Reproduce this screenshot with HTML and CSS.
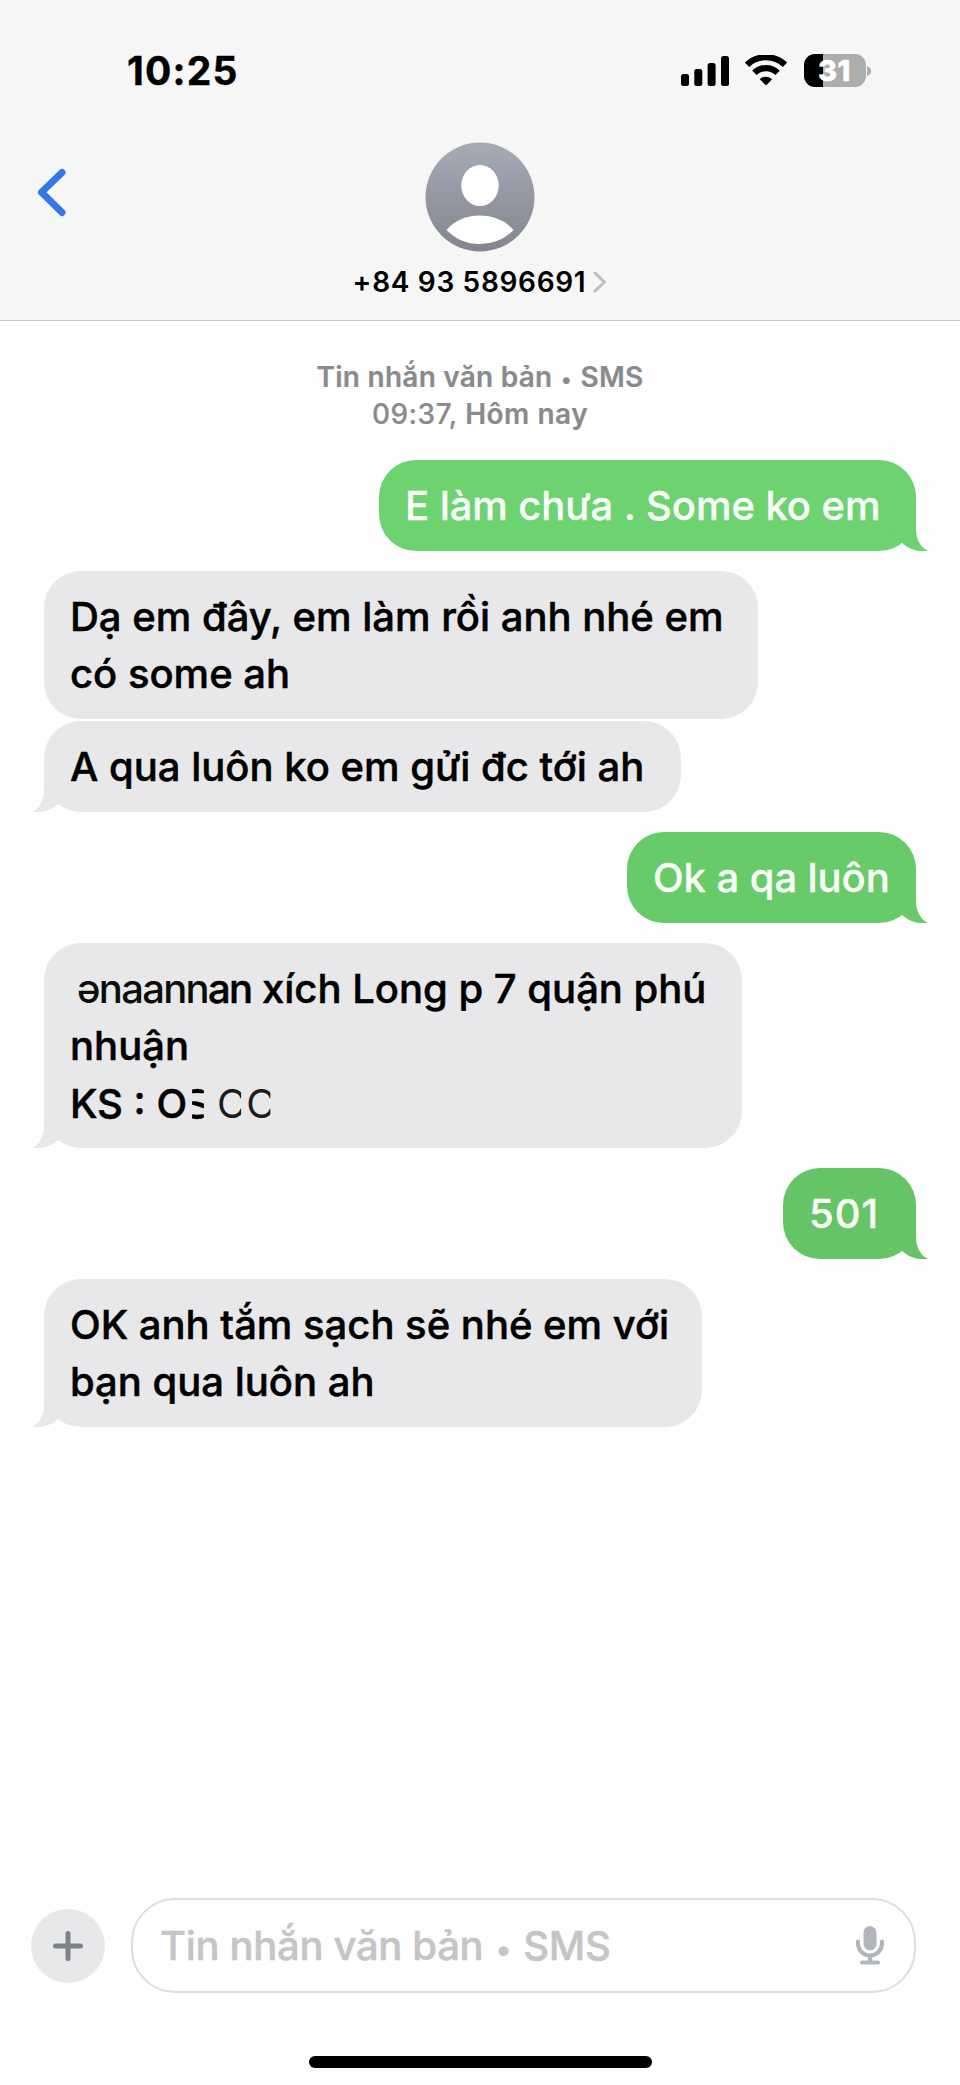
FILE: index.html
```html
<!DOCTYPE html>
<html lang="vi">
<head>
<meta charset="utf-8">
<title>+84 93 5896691</title>
<link rel="stylesheet" href="styles.css">
</head>
<body>
<svg width="0" height="0" class="defs" aria-hidden="true">
  <symbol id="tail" viewBox="0 0 40 40"><path d="M28 0V18C28 29 33 36.500 40 40C30 41 20.500 38.500 13.700 31.500L6 20Z"/></symbol>
</svg>
<div class="screen">
  <header class="top">
    <div class="status">
      <span class="time">10:25</span>
      <div class="indicators">
        <svg class="signal" width="48" height="30" viewBox="0 0 48 30"><rect x="0" y="18" width="8" height="12" rx="2.500"/><rect x="13.300" y="13" width="8" height="17" rx="2.500"/><rect x="26.600" y="7" width="8" height="23" rx="2.500"/><rect x="40" y="0" width="8" height="30" rx="2.500"/></svg>
        <svg class="wifi" width="42" height="31" viewBox="0 0 42 31"><g fill="none" stroke="#000" stroke-width="6.200"><path d="M2 9.800A27.500 27.500 0 0 1 40 9.800"/><path d="M9.400 17.900A16.500 16.500 0 0 1 32.600 17.900"/></g><path d="M14.800 24.200A8.800 8.800 0 0 1 27.200 24.200L21.800 29.700Q21 30.400 20.200 29.700Z"/></svg>
        <div class="battery"><span class="level">31</span></div>
        <svg class="nub" width="4" height="10" viewBox="0 0 4 10"><path d="M0 0Q4 1.500 4 5T0 10Z"/></svg>
      </div>
    </div>
    <div class="contact">
      <svg class="back" width="30" height="50" viewBox="0 0 30 50"><path d="M26 5.500L5.500 25.300L26 45.500"/></svg>
      <div class="person">
        <svg width="110" height="110" viewBox="0 0 110 110">
          <defs><linearGradient id="av" x1="0" y1="0" x2="0" y2="1"><stop offset="0" stop-color="#a7abb8"/><stop offset="1" stop-color="#83858e"/></linearGradient></defs>
          <circle cx="55" cy="55" r="54.500" fill="url(#av)"/>
          <ellipse cx="55" cy="43.500" rx="18.700" ry="20.500" fill="#fff"/>
          <path d="M21.500 88Q34 73.500 55 73.500T88.500 88Q75 102 55 102T21.500 88Z" fill="#fff"/>
        </svg>
        <div class="name"><span>+84 93 5896691</span><svg width="14" height="22" viewBox="0 0 14 22"><path d="M2 2L11.500 11L2 20"/></svg></div>
      </div>
    </div>
  </header>

  <main class="thread">
    <div class="stamp">
      <p class="kind">Tin nhắn văn bản <span class="dot">•</span> SMS</p>
      <p class="when"><span class="hour">09:37,</span> Hôm nay</p>
    </div>
    <div class="msg out w-a">E làm chưa . Some ko em<svg class="tail"><use href="#tail"/></svg></div>
    <div class="msg in w-b">Dạ em đây, em làm rồi anh nhé em<br>có some ah</div>
    <div class="msg in w-c joined">A qua luôn ko em gửi đc tới ah<svg class="tail"><use href="#tail"/></svg></div>
    <div class="msg out mid w-d">Ok a qa luôn<svg class="tail"><use href="#tail"/></svg></div>
    <div class="msg in w-e"><span class="worn"><span class="faded">ənaann</span>an</span> xích Long p 7 quận phú<br>nhuận<br>KS : O<span class="bits">S</span><span class="arc">C</span><span class="arc last">C</span><svg class="tail"><use href="#tail"/></svg></div>
    <div class="msg out low w-f">501<svg class="tail"><use href="#tail"/></svg></div>
    <div class="msg in w-g">OK anh tắm sạch sẽ nhé em với<br>bạn qua luôn ah<svg class="tail"><use href="#tail"/></svg></div>
  </main>

  <footer class="composer">
    <div class="row">
      <div class="plus"><svg width="30" height="30" viewBox="0 0 30 30"><path d="M15 2.500V27.500M2.500 15H27.500"/></svg></div>
      <div class="field"><span>Tin nhắn văn bản <span class="dot">•</span> SMS</span>
        <svg width="28" height="39" viewBox="0 0 28 39"><rect x="7.500" y="0" width="13" height="24.500" rx="6.500"/><path d="M2 15.500V17.500A12 12 0 0 0 26 17.500V15.500M14 29.500V36M6 36.500H22"/></svg>
      </div>
    </div>
    <div class="home"></div>
  </footer>
</div>
</body>
</html>
```
FILE: styles.css
```css
* { box-sizing: border-box; }
body { margin: 0; background: #fefefe; color: #000; font-family: Inter, "Liberation Sans", sans-serif; }
p { margin: 0; }
svg { display: block; flex: none; }
.defs { position: absolute; }
.screen { width: 960px; height: 2085px; display: flex; flex-direction: column; overflow: hidden; }

.top { height: 321px; flex: none; background: #f6f6f6; border-bottom: 1px solid #c6c6c6; }
.status { height: 142px; padding: 47px 89px 0 127px; display: flex; justify-content: space-between; align-items: flex-start; }
.time { font-size: 39px; font-weight: 700; line-height: 48px; letter-spacing: 1.2px; -webkit-text-stroke: 0.4px; }
.indicators { display: flex; align-items: center; height: 47px; }
.wifi { margin-left: 16px; }
.battery { width: 62px; height: 33px; margin-left: 17px; border-radius: 11px; background: linear-gradient(90deg, #000 19px, #adadad 19px); text-align: center; }
.level { display: block; color: #fff; font-size: 29px; line-height: 33px; font-weight: 800; letter-spacing: 0.5px; -webkit-text-stroke: 0.5px; }
.nub { margin-left: 1.5px; fill: #adadad; }
.contact { display: grid; grid-template-columns: 200px 1fr 200px; align-items: start; }
.back { margin: 25px 0 0 36px; fill: none; stroke: #3578e5; stroke-width: 7; stroke-linecap: round; stroke-linejoin: round; }
.person { display: flex; flex-direction: column; align-items: center; }
.name { margin-top: 13px; display: flex; align-items: center; gap: 7px; font-size: 28px; line-height: 34px; font-weight: 600; letter-spacing: 0.68px; }
.name svg { fill: none; stroke: #bdbdbd; stroke-width: 3; stroke-linecap: round; stroke-linejoin: round; }

.thread { flex: 1; padding: 37.5px 44px 0; display: flex; flex-direction: column; align-items: flex-start; }
.stamp { align-self: stretch; text-align: center; color: #8a8a8c; font-size: 28px; font-weight: 600; line-height: 37px; margin-bottom: 27.5px; -webkit-text-stroke: 0.2px; }
.kind { letter-spacing: 0.25px; }
.when { letter-spacing: 0.5px; line-height: 36px; padding-bottom: 1px; }
.hour { font-weight: 500; }
.dot { font-size: 0.75em; padding: 0 0.06em; line-height: 1; }

.msg { position: relative; margin-bottom: 20px; padding: 17px 0 16.2px 26px; border-radius: 37px; font-size: 40px; line-height: 57.5px; font-weight: 500; white-space: nowrap; -webkit-text-stroke: 0.5px; }
.in { background: #e8e8ea; fill: #e8e8ea; }
.out { align-self: flex-end; background: #6dd370; fill: #6dd370; color: #fafffa; letter-spacing: -0.07px; -webkit-text-stroke: 0.3px; }
.mid { background: #68cb69; fill: #68cb69; }
.low { background: #65c566; fill: #65c566; }
.tail { position: absolute; bottom: 0; width: 40px; height: 40px; }
.out .tail { right: -12px; }
.in .tail { left: -12px; transform: scaleX(-1); }
.w-a { width: 537px; }
.w-b { width: 714px; }
.joined { margin-top: -17.7px; }
.w-c { width: 637px; }
.w-d { width: 289px; }
.w-e { width: 698px; }
.w-f { width: 133px; letter-spacing: 1px; }
.w-g { width: 658px; }

/* partly rubbed-out characters */
.worn { letter-spacing: -1.7px; margin-left: 7px; }
.faded { color: #0c0e0c; -webkit-text-stroke: 0; }
.bits { display: inline-block; margin: 0 0 0 -3px; clip-path: inset(0 6px 0 8px); -webkit-mask-image: linear-gradient(#000 31%, transparent 33%, transparent 45%, #000 47%, #000 57%, transparent 59%, transparent 68%, #000 70%); mask-image: linear-gradient(#000 31%, transparent 33%, transparent 45%, #000 47%, #000 57%, transparent 59%, transparent 68%, #000 70%); }
.arc { display: inline-block; font-weight: 400; margin-left: 7px; clip-path: inset(0 5px 0 0); color: #1c1c1c; -webkit-text-stroke: 0; }
.arc.last { margin-left: 0; clip-path: inset(0 5px 0 0); }

.composer { flex: none; height: 187px; padding: 0 44px 0 31px; display: flex; flex-direction: column; align-items: center; }
.row { align-self: stretch; display: flex; align-items: center; gap: 26px; }
.plus { width: 74px; height: 74px; border-radius: 50%; background: #e6e8ea; display: flex; align-items: center; justify-content: center; }
.plus svg { fill: none; stroke: #7f8184; stroke-width: 5; stroke-linecap: round; }
.field { flex: 1; height: 95px; border: 2px solid #dedede; border-radius: 44px; padding: 0 30px 0 27px; display: flex; align-items: center; justify-content: space-between; color: #c5c5c5; font-size: 40px; font-weight: 500; letter-spacing: -0.33px; -webkit-text-stroke: 0.5px; }
.field svg { fill: #b2b5bb; }
.field path { fill: none; stroke: #b2b5bb; stroke-width: 4; stroke-linecap: round; }
.home { width: 343px; height: 12px; margin: 63px 0 0 13px; border-radius: 6px; background: #000; }
```
